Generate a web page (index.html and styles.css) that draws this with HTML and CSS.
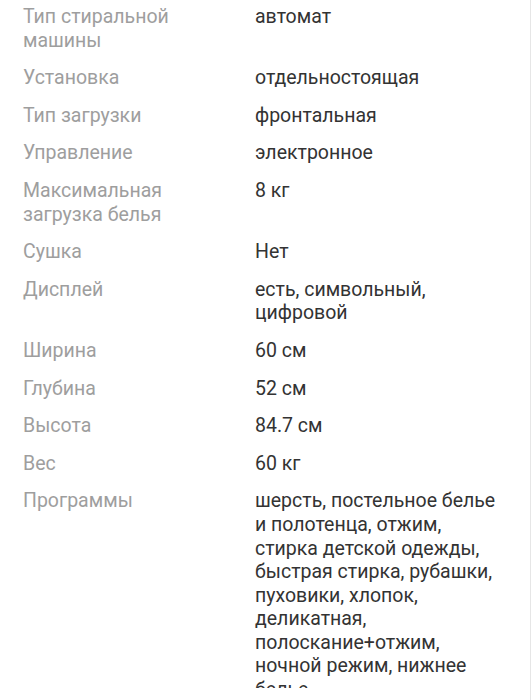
FILE: index.html
```html
<!DOCTYPE html>
<html lang="ru">
<head>
<meta charset="utf-8">
<link rel="stylesheet" href="styles.css">
</head>
<body>
<div class="frame">
  <dl class="specs">
    <div class="row"><dt>Тип стиральной машины</dt><dd>автомат</dd></div>
    <div class="row"><dt>Установка</dt><dd>отдельностоящая</dd></div>
    <div class="row"><dt>Тип загрузки</dt><dd>фронтальная</dd></div>
    <div class="row"><dt>Управление</dt><dd>электронное</dd></div>
    <div class="row"><dt>Максимальная загрузка белья</dt><dd>8 кг</dd></div>
    <div class="row"><dt>Сушка</dt><dd>Нет</dd></div>
    <div class="row"><dt>Дисплей</dt><dd>есть, символьный, цифровой</dd></div>
    <div class="row"><dt>Ширина</dt><dd>60 см</dd></div>
    <div class="row"><dt>Глубина</dt><dd>52 см</dd></div>
    <div class="row"><dt>Высота</dt><dd>84.7 см</dd></div>
    <div class="row"><dt>Вес</dt><dd>60 кг</dd></div>
    <div class="row"><dt>Программы</dt><dd>шерсть, постельное белье и полотенца, отжим, стирка детской одежды, быстрая стирка, рубашки, пуховики, хлопок, деликатная, полоскание+отжим, ночной режим, нижнее белье</dd></div>
  </dl>
</div>
</body>
</html>
```
FILE: styles.css
```css
html, body {
  margin: 0;
  padding: 0;
  background: #fff;
}
body {
  font-family: Roboto, "Noto Sans", sans-serif;
  font-size: 19.5px;
  line-height: 23.6px;
}
.frame {
  width: 530px;
  height: 700px;
  border-right: 1px solid #e6e6e6;
  overflow: hidden;
}
.specs {
  margin: 0;
  padding: 5px 28px 0 23px;
  height: 683px;
  overflow: hidden;
}
.row {
  display: grid;
  grid-template-columns: 232px 1fr;
  margin-bottom: 14px;
}
dt {
  color: #9e9e9e;
  margin: 0;
  padding-right: 12px;
}
dd {
  color: #333;
  margin: 0;
}
```
